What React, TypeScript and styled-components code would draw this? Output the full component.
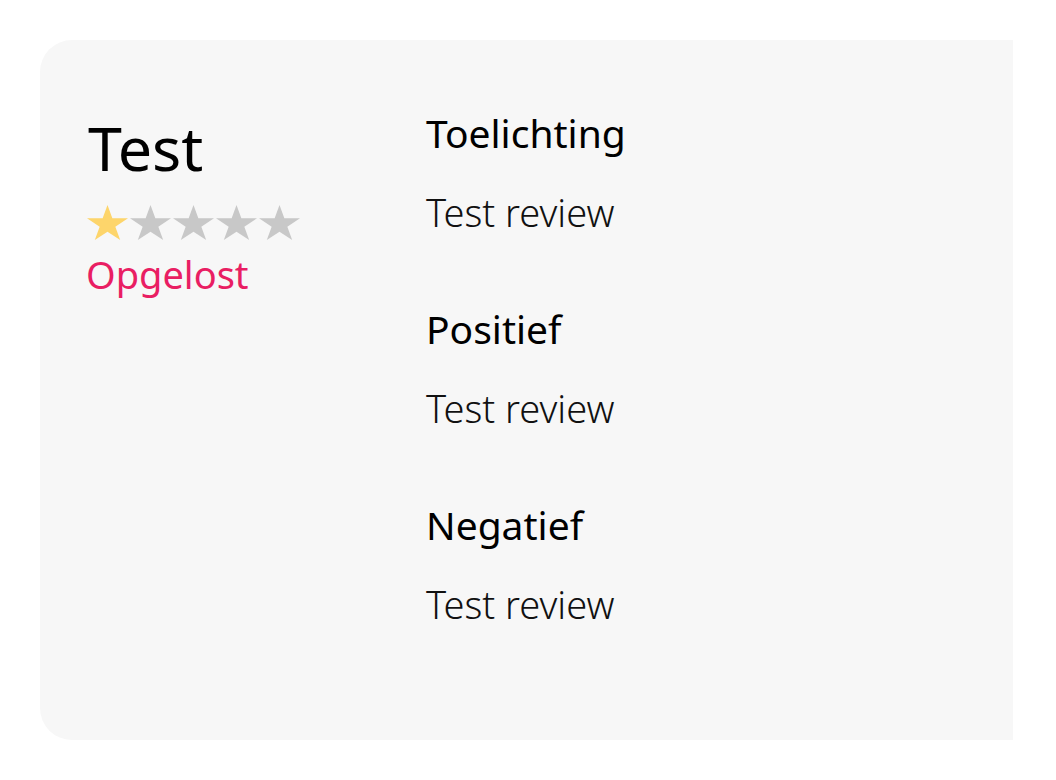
import React from 'react';
import styled, { createGlobalStyle } from 'styled-components';

const GlobalStyle = createGlobalStyle`
  html, body {
    margin: 0;
    padding: 0;
    background: #fff;
  }
  body {
    font-family: "Noto Sans", "Open Sans", sans-serif;
    color: #000;
  }
`;

const Page = styled.div`
  padding: 40px 43px 40px 40px;
`;

const Card = styled.div`
  background: #f7f7f7;
  border-radius: 32px 0 0 32px;
  height: 700px;
  box-sizing: border-box;
  padding: 68px 48px 0 48px;
  display: grid;
  grid-template-columns: 338px 1fr;
  align-items: start;
`;

const Summary = styled.div`
  display: flex;
  flex-direction: column;
  align-items: flex-start;
`;

const Title = styled.h1`
  margin: 0;
  font-size: 61px;
  font-weight: 400;
  line-height: 80px;
`;

const Stars = styled.div`
  display: flex;
  gap: 2px;
  margin-top: 17px;
  margin-left: -1px;
`;

const StarIcon = styled.svg<{ $on: boolean }>`
  display: block;
  width: 41px;
  height: 35px;
  fill: ${(p) => (p.$on ? '#fdd56b' : '#c8c8c8')};
`;

const Status = styled.div`
  margin-top: 12px;
  margin-left: -2px;
  font-size: 38px;
  line-height: 44px;
  color: #e91e63;
`;

const Sections = styled.div`
  display: flex;
  flex-direction: column;
  gap: 66px;
  margin-top: -1px;
`;

const Section = styled.section`
  display: flex;
  flex-direction: column;
  gap: 28px;
`;

const Heading = styled.h2`
  margin: 0;
  font-size: 39px;
  font-weight: 400;
  line-height: 52px;
`;

const Body = styled.p`
  margin: 0;
  font-size: 38px;
  font-weight: 300;
  line-height: 50px;
  color: #111;
`;

const Star: React.FC<{ on: boolean }> = ({ on }) => (
  <StarIcon $on={on} viewBox="0 0 41 35">
    <polygon points="20.5,0 25.35,13.37 41,13.37 28.34,21.63 33.18,35 20.5,26.74 7.82,35 12.66,21.63 0,13.37 15.65,13.37" />
  </StarIcon>
);

const sections = [
  { title: 'Toelichting', text: 'Test review' },
  { title: 'Positief', text: 'Test review' },
  { title: 'Negatief', text: 'Test review' },
];

const rating = 1;

const App: React.FC = () => (
  <>
    <GlobalStyle />
    <Page>
      <Card>
        <Summary>
          <Title>Test</Title>
          <Stars>
            {[1, 2, 3, 4, 5].map((n) => (
              <Star key={n} on={n <= rating} />
            ))}
          </Stars>
          <Status>Opgelost</Status>
        </Summary>
        <Sections>
          {sections.map((s) => (
            <Section key={s.title}>
              <Heading>{s.title}</Heading>
              <Body>{s.text}</Body>
            </Section>
          ))}
        </Sections>
      </Card>
    </Page>
  </>
);

export default App;
